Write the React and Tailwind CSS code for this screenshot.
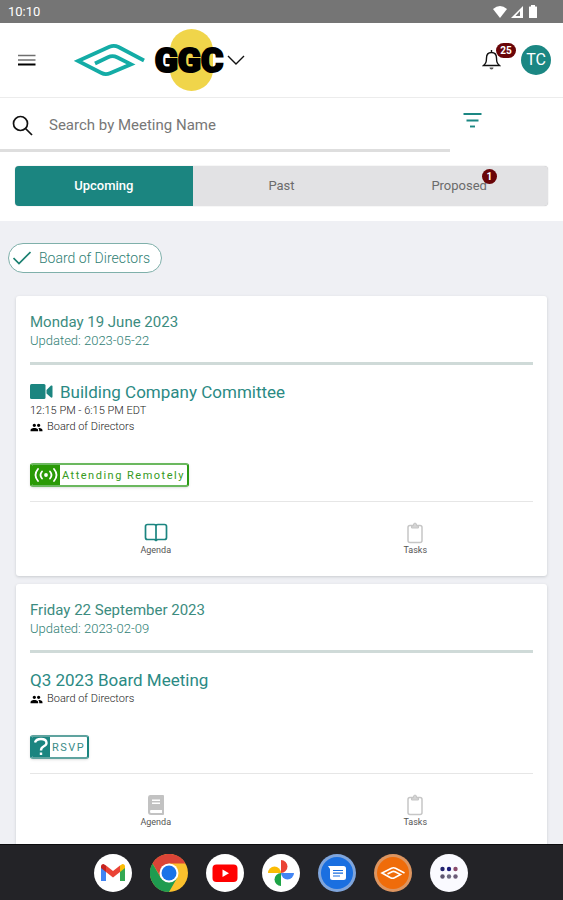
import React, { useState } from 'react';
import { MdGroup } from 'react-icons/md';

const meetings = [
  {
    id: 1,
    date: 'Monday 19 June 2023',
    updated: '2023-05-22',
    title: 'Building Company Committee',
    time: '12:15 PM - 6:15 PM EDT',
    group: 'Board of Directors',
    video: true,
    status: 'remote',
    agendaReady: true,
  },
  {
    id: 2,
    date: 'Friday 22 September 2023',
    updated: '2023-02-09',
    title: 'Q3 2023 Board Meeting',
    group: 'Board of Directors',
    status: 'rsvp',
  },
];

const tabs = [
  { name: 'Upcoming' },
  { name: 'Past' },
  { name: 'Proposed', count: 1 },
];

function StatusBar() {
  return (
    <div className="h-[23px] shrink-0 bg-[#757575] px-2 flex items-center justify-between text-white">
      <span className="text-[13px]">10:10</span>
      <div className="flex items-center gap-1 pr-3">
        <svg className="w-[14px] h-3" viewBox="0 0 14 12" fill="#fff">
          <path d="M0 3Q7-3 14 3L7 12Z" />
        </svg>
        <svg className="w-3 h-3" viewBox="0 0 12 12">
          <path d="M12 0V12H0Z" fill="#fff" />
          <path d="M9 5V10H4.500Z" fill="#757575" />
        </svg>
        <svg className="w-4 h-[13px]" viewBox="0 0 16 13" fill="#fff">
          <path d="M4 0h4v1.500h1.500q.5 0 .5.500v10.500q0 .5-.5.500h-7q-.5 0-.5-.5V2q0-.5.5-.5H4Z" />
        </svg>
      </div>
    </div>
  );
}

function DiamondLogo() {
  return (
    <svg className="w-[72px] h-[34px]" viewBox="0 0 72 34" fill="none" stroke="#14aca6" strokeWidth="3.800">
      <path d="M70 17.500L44.500 4Q40 2 35.500 3.800L4 18L27 29.800Q31.500 32.200 36 30.200L57 21.300L43 14.300Q38.500 12.100 34 14.300L21 20.500" />
    </svg>
  );
}

function Header() {
  return (
    <header className="h-[75px] shrink-0 border-b border-[#ececec] pl-[18px] pr-3 flex items-center">
      <button aria-label="Menu">
        <svg className="w-[18px] h-[14px]" viewBox="0 0 18 14">
          <path d="M0 2.500h17.500M0 7h17.500" stroke="#6f6f6f" strokeWidth="1.600" />
          <path d="M0 11.500h17.500" stroke="#000" strokeWidth="2" />
        </svg>
      </button>
      <button aria-label="Switch organisation" className="ml-[38px] flex items-center">
        <DiamondLogo />
        <span className="relative ml-2 w-[70px] h-[62px] flex items-center justify-center">
          <span className="absolute left-4 top-0 w-[43px] h-[62px] rounded-full bg-[#f0d54a]" />
          <span className="relative font-black text-[34px] leading-none text-black [-webkit-text-stroke:2px_#000]">
            GGC
          </span>
        </span>
        <svg className="ml-[3px] w-[18px] h-[10px]" viewBox="0 0 18 10" fill="none" stroke="#111" strokeWidth="1.400">
          <path d="M1 1L9 9L17 1" />
        </svg>
      </button>
      <div className="ml-auto flex items-center gap-5">
        <button aria-label="Notifications" className="relative">
          <svg className="w-[19px] h-[22px]" viewBox="0 0 19 22" fill="none" stroke="#111" strokeWidth="1.400">
            <path d="M9.500 1V4M9.500 3.500C6 3.500 4.500 6 4.500 9C4.500 13.500 3.500 14.500 1.500 16.500H17.500C15.500 14.500 14.500 13.500 14.500 9C14.500 6 13 3.500 9.500 3.500Z" />
            <path d="M7.500 18.500a2 2 0 0 0 4 0Z" fill="#555" stroke="none" />
          </svg>
          <span className="absolute left-[14px] -top-[6px] w-5 h-[15px] rounded-full bg-[#6a0508] text-white text-[10px] leading-[15px] font-bold text-center">
            25
          </span>
        </button>
        <button className="w-[30px] h-[30px] rounded-full bg-[#1b8783] text-white text-base">TC</button>
      </div>
    </header>
  );
}

function SearchRow() {
  return (
    <div className="flex">
      <label className="w-4/5 h-[54px] border-b-3 border-[#dedede] pl-3 pt-[3px] flex items-center gap-4">
        <svg className="w-[21px] h-[21px] shrink-0" viewBox="0 0 21 21" fill="none" stroke="#111" strokeWidth="1.700">
          <circle cx="8.500" cy="8.500" r="7" />
          <path d="M13.500 13.500L20 20" />
        </svg>
        <input
          type="text"
          aria-label="Search by Meeting Name"
          placeholder="Search by Meeting Name"
          className="flex-1 min-w-0 text-[15px] outline-none placeholder:text-[#777]"
        />
      </label>
      <button aria-label="Filter" className="ml-[13px] mt-[14px] self-start">
        <svg className="w-[19px] h-4" viewBox="0 0 19 16" stroke="#1b8783" strokeWidth="1.900">
          <path d="M.5 2H18.500M3.500 8.500H15.500" />
          <path d="M7 14.500H12" />
        </svg>
      </button>
    </div>
  );
}

function Tabs() {
  const [active, setActive] = useState('Upcoming');

  return (
    <div className="px-[15px] pt-[14px] pb-[15px]">
      <div className="h-10 grid grid-cols-3 rounded bg-[#e2e2e4] shadow-[0_0_1px_#aaa] text-[13px]">
        {tabs.map(t => (
          <button
            key={t.name}
            onClick={() => setActive(t.name)}
            className={active === t.name ? 'bg-[#1b8580] text-white font-medium rounded-l' : 'text-[#6b6b6b]'}
          >
            <span className="relative">
              {t.name}
              {t.count && (
                <span className="absolute -right-[10px] -top-[9px] w-[15px] h-[15px] rounded-full bg-[#6a0508] text-white text-[10px] leading-[15px] font-bold text-center">
                  {t.count}
                </span>
              )}
            </span>
          </button>
        ))}
      </div>
    </div>
  );
}

function StatusBadge({ status }) {
  if (status === 'remote') {
    return (
      <button className="h-6 flex items-stretch rounded-[3px] border-2 border-[#6bb85f] border-r-[#2a9a14] border-l-[#2a9a06] bg-white overflow-hidden shadow-sm">
        <span className="w-7 bg-[#2a9a06] flex items-center justify-center">
          <svg className="w-6 h-4" viewBox="0 0 24 16" fill="none" stroke="#fff" strokeWidth="1.800" strokeLinecap="round">
            <circle cx="12" cy="8" r="1" fill="#fff" />
            <path d="M8 4.500Q5 8 8 11.500M16 4.500Q19 8 16 11.500M4 2Q-1 8 4 14M20 2Q25 8 20 14" />
          </svg>
        </span>
        <span className="px-[2px] pt-px text-[11px] leading-5 tracking-[1.5px] text-[#369a22]">Attending Remotely</span>
      </button>
    );
  }
  return (
    <button className="h-6 flex items-stretch rounded-[3px] border-2 border-[#5fa39f] border-r-[#1b8580] border-l-[#1b8580] bg-white overflow-hidden shadow-sm">
      <span className="w-[18px] bg-[#1b8580] flex items-center justify-center">
        <svg className="w-4 h-5" viewBox="0 0 16 20" fill="none" stroke="#fff" strokeWidth="2.400">
          <path d="M2 5.500Q3 2 8 2Q13.500 2 13.500 6Q13.500 8 10.500 9.500Q8 10.800 8 13.500" />
          <path d="M8 15.500V18" />
        </svg>
      </span>
      <span className="px-[2px] pt-px text-[11px] leading-5 tracking-[1.5px] text-[#3b8c88]">RSVP</span>
    </button>
  );
}

function AgendaIcon({ ready }) {
  if (ready) {
    return (
      <svg className="w-6 h-[22px]" viewBox="0 0 24 22" fill="none" stroke="#1b8580" strokeWidth="1.700">
        <path d="M12 3.500Q11.500 2.500 10 2.500H3.500Q1.500 2.500 1.500 4.500V15.500Q1.500 17.500 3.500 17.500H10.500L12 18.500L13.500 17.500H20.500Q22.500 17.500 22.500 15.500V4.500Q22.500 2.500 20.500 2.500H14Q12.500 2.500 12 3.500V18.500" />
      </svg>
    );
  }
  return (
    <svg className="w-6 h-[22px]" viewBox="0 0 24 22">
      <path d="M6 1H19Q20 1 20 2V20Q20 21 19 21H7Q4 21 4 18V3.500Q4 1 6 1Z" fill="#c2c2c2" />
      <path d="M8 5.500H16V7H8ZM8 8.500H16V10H8ZM6.500 16H18V19H6.500Q5.500 17.500 6.500 16Z" fill="#fff" />
    </svg>
  );
}

function TasksIcon() {
  return (
    <svg className="w-6 h-[22px]" viewBox="0 0 24 22" fill="none" stroke="#c6c6c6" strokeWidth="1.500">
      <rect x="5" y="3.500" width="14" height="17" rx="2" />
      <path d="M8.500 6V4H10.200Q10.200 1 12 1Q13.800 1 13.800 4H15.500V6Z" fill="#d4d4d4" strokeWidth="1" />
    </svg>
  );
}

function MeetingCard({ m }) {
  return (
    <article className="bg-white rounded-[3px] shadow-[0_1px_3px_#c9cbd0] px-[14px] pt-4 pb-5">
      <p className="text-[15px] leading-5 text-[#3c8c80]">{m.date}</p>
      <p className="text-[13px] leading-[18px] font-light text-[#2f8074]">Updated: {m.updated}</p>
      <hr className="mt-3 border-t-3 border-[#cfdad8]" />
      <h2 className="mt-4 flex items-center gap-[6px] text-[17px] leading-[22px] text-[#2b8a84]">
        {m.video && (
          <svg className="w-6 h-4" viewBox="0 0 24 16" fill="#1b8580">
            <rect x="0" y="0" width="15.500" height="15" rx="1.500" />
            <path d="M16.500 6L21 1.500Q22.500 1 22.500 2.500V12.500Q22.500 14 21 13.500L16.500 9.500Z" />
          </svg>
        )}
        {m.title}
      </h2>
      {m.time && <p className="text-[11px] leading-4 font-light text-[#222]">{m.time}</p>}
      <p className="flex items-center gap-1 text-[11px] leading-4 font-light text-[#222]">
        <MdGroup className="w-[13px] h-[13px] text-black" />
        {m.group}
      </p>
      <div className="mt-7 flex">
        <StatusBadge status={m.status} />
      </div>
      <div className="mt-[14px] pt-5 pl-2 border-t border-[#e6e6e6] grid grid-cols-2 gap-6 text-[9px] leading-3 text-[#555]">
        <button className="flex flex-col items-center">
          <AgendaIcon ready={m.agendaReady} />
          Agenda
        </button>
        <button className="flex flex-col items-center">
          <TasksIcon />
          Tasks
        </button>
      </div>
    </article>
  );
}

function Dock() {
  const icon = 'w-[38px] h-[38px]';

  return (
    <nav className="h-14 shrink-0 bg-[#232327] border-t border-[#0c0c0e] pr-[2px] flex items-center justify-center gap-[18px]">
      <button aria-label="Gmail">
        <svg className={icon} viewBox="0 0 38 38">
          <circle cx="19" cy="19" r="19" fill="#fff" />
          <path d="M7 13V27H12V17L7 13Z" fill="#4285f4" />
          <path d="M31 13V27H26V17L31 13Z" fill="#34a853" />
          <path d="M7 14V12.500Q7 10 9.500 10L12 11.500V18L7 14Z" fill="#c5221f" />
          <path d="M31 14V12.500Q31 10 28.500 10L26 11.500V18L31 14Z" fill="#fbbc04" />
          <path d="M12 11.500L19 17L26 11.500V18L19 23.500L12 18Z" fill="#ea4335" />
        </svg>
      </button>
      <button aria-label="Chrome">
        <svg className={icon} viewBox="0 0 38 38">
          <circle cx="19" cy="19" r="19" fill="#fbc02d" />
          <path d="M2.500 9.500A19 19 0 0 1 35.500 9.500H19L11 23.500Z" fill="#db4437" />
          <path d="M2.500 9.500A19 19 0 0 0 19 38L27.200 23.700L19 28.500L10.800 23.700Z" fill="#1e9b50" />
          <circle cx="19" cy="19" r="9.500" fill="#fff" />
          <circle cx="19" cy="19" r="7.500" fill="#1a73e8" />
        </svg>
      </button>
      <button aria-label="YouTube">
        <svg className={icon} viewBox="0 0 38 38">
          <circle cx="19" cy="19" r="19" fill="#fff" />
          <rect x="6.500" y="10.500" width="25" height="17.500" rx="4" fill="#f00" />
          <path d="M16.500 15.500L23 19.200L16.500 23Z" fill="#fff" />
        </svg>
      </button>
      <button aria-label="Photos">
        <svg className={icon} viewBox="0 0 38 38">
          <circle cx="19" cy="19" r="19" fill="#fff" />
          <path d="M19 19V6A6.500 6.500 0 0 1 19 19Z" fill="#ea4335" />
          <path d="M19 19H32A6.500 6.500 0 0 1 19 19Z" fill="#4285f4" />
          <path d="M19 19V32A6.500 6.500 0 0 1 19 19Z" fill="#1ea446" />
          <path d="M19 19H6A6.500 6.500 0 0 1 19 19Z" fill="#fbbc04" />
        </svg>
      </button>
      <button aria-label="Messages">
        <svg className={icon} viewBox="0 0 38 38">
          <circle cx="19" cy="19" r="19" fill="#7fa5dc" />
          <circle cx="19" cy="19" r="16" fill="#1a6fe0" />
          <path d="M10 12H25.500Q28 12 28 14.500V23.500Q28 26 25.500 26H14.500Q12 26 12 23.500V15Z" fill="#fff" />
          <path d="M15 16.500H25M15 19.200H25M15 22H22" stroke="#1a6fe0" strokeWidth="1.200" />
        </svg>
      </button>
      <button aria-label="Board portal">
        <svg className={icon} viewBox="0 0 38 38">
          <circle cx="19" cy="19" r="19" fill="#dd9560" />
          <circle cx="19" cy="19" r="16" fill="#ef6c0a" />
          <path
            d="M30.500 19L21.500 14.300Q19.500 13.300 17.500 14.300L8 19L16.500 23.700Q18.500 24.700 20.500 23.700L26.500 20.500L21 17.700Q19.500 17 18 17.700L13.500 20"
            fill="none"
            stroke="#fff"
            strokeWidth="1.600"
          />
        </svg>
      </button>
      <button aria-label="All apps">
        <svg className={icon} viewBox="0 0 38 38">
          <circle cx="19" cy="19" r="19" fill="#fafaff" />
          <circle cx="12.500" cy="15" r="2.200" fill="#23236e" />
          <circle cx="19" cy="15" r="2.200" fill="#1b1b7c" />
          <circle cx="25.500" cy="15" r="2.200" fill="#8a4a6c" />
          <circle cx="12.500" cy="22.500" r="2.200" fill="#5d5670" />
          <circle cx="19" cy="22.500" r="2.200" fill="#6d6a80" />
          <circle cx="25.500" cy="22.500" r="2.200" fill="#6a5b78" />
        </svg>
      </button>
    </nav>
  );
}

export default function App() {
  return (
    <div className="h-screen flex flex-col overflow-hidden bg-white font-[Roboto,sans-serif]">
      <StatusBar />
      <Header />
      <SearchRow />
      <Tabs />
      <main className="flex-1 min-h-0 overflow-hidden bg-[#eff0f4] pt-[22px]">
        <button className="ml-2 h-[30px] pl-1 pr-[11px] rounded-full border border-[#7fb0aa] bg-white flex items-center gap-2 text-[14px] font-light text-[#2f8074]">
          <svg className="w-[18px] h-[14px]" viewBox="0 0 18 14" fill="none" stroke="#1b8071" strokeWidth="1.700">
            <path d="M.5 7L6 12.500L17.500 1" />
          </svg>
          Board of Directors
        </button>
        <div className="mt-[23px] px-4 space-y-2">
          {meetings.map(m => (
            <MeetingCard key={m.id} m={m} />
          ))}
        </div>
      </main>
      <Dock />
    </div>
  );
}
